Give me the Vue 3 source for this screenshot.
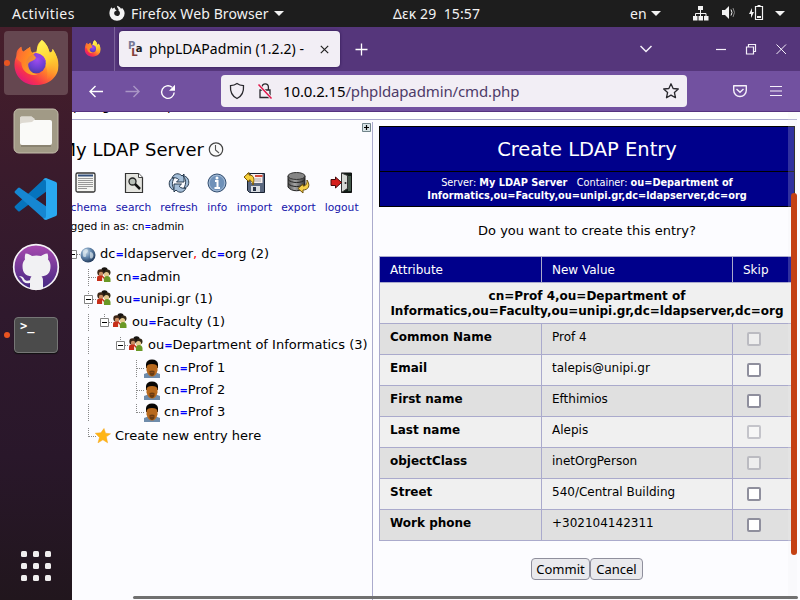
<script setup>
const tree = [
  { cells: ['minus-root'], icon: 'globe', parts: ['dc', '=', 'ldapserver', ',', ' dc', '=', 'org (2)'] },
  { cells: ['blank', 'tee'], icon: 'people', parts: ['cn', '=', 'admin'] },
  { cells: ['blank', 'minus-mid'], icon: 'people', parts: ['ou', '=', 'unipi.gr (1)'] },
  { cells: ['blank', 'line', 'minus-last'], icon: 'people', parts: ['ou', '=', 'Faculty (1)'] },
  { cells: ['blank', 'line', 'blank', 'minus-last'], icon: 'people', parts: ['ou', '=', 'Department of Informatics (3)'] },
  { cells: ['blank', 'line', 'blank', 'blank', 'tee'], icon: 'person', parts: ['cn', '=', 'Prof 1'] },
  { cells: ['blank', 'line', 'blank', 'blank', 'tee'], icon: 'person', parts: ['cn', '=', 'Prof 2'] },
  { cells: ['blank', 'line', 'blank', 'blank', 'corner'], icon: 'person', parts: ['cn', '=', 'Prof 3'] },
  { cells: ['blank', 'corner'], icon: 'star', parts: ['Create new entry here'] },
]
const partClass = (p) => (p === '=' ? 'eq' : p === ',' ? 'comma' : '')
const rows = [
  ['Common Name', 'Prof 4', true],
  ['Email', 'talepis@unipi.gr', false],
  ['First name', 'Efthimios', false],
  ['Last name', 'Alepis', true],
  ['objectClass', 'inetOrgPerson', true],
  ['Street', '540/Central Building', false],
  ['Work phone', '+302104142311', false],
]
const tools = ['schema', 'search', 'refresh', 'info', 'import', 'export', 'logout']
</script>

<template>
  <div class="screen">
    <svg width="0" height="0" class="defs">
      <defs>
        <linearGradient id="fxBody" x1="0.85" y1="0.1" x2="0.2" y2="0.95">
          <stop offset="0" stop-color="#fff04a" /><stop offset="0.3" stop-color="#ffc02c" />
          <stop offset="0.55" stop-color="#ff7b2c" /><stop offset="0.8" stop-color="#f8334b" /><stop offset="1" stop-color="#e0187c" />
        </linearGradient>
        <linearGradient id="fxTail" x1="0.4" y1="0" x2="0.7" y2="1">
          <stop offset="0" stop-color="#fff255" /><stop offset="0.5" stop-color="#ffd332" /><stop offset="1" stop-color="#ff8a2b" stop-opacity="0" />
        </linearGradient>
        <radialGradient id="fxCore" cx="0.55" cy="0.3" r="0.75">
          <stop offset="0" stop-color="#a04cf0" /><stop offset="0.6" stop-color="#6b3fd0" /><stop offset="1" stop-color="#4b3c9e" />
        </radialGradient>
        <linearGradient id="fxHead" x1="0" y1="0" x2="1" y2="0.8">
          <stop offset="0" stop-color="#ff5a3c" /><stop offset="0.5" stop-color="#ff8a22" /><stop offset="1" stop-color="#ffb32c" />
        </linearGradient>
        <linearGradient id="ghBg" x1="0" y1="0" x2="0" y2="1">
          <stop offset="0" stop-color="#a84ab0" /><stop offset="1" stop-color="#432881" />
        </linearGradient>
        <radialGradient id="globeBg" cx="0.35" cy="0.3" r="0.75">
          <stop offset="0" stop-color="#c9dcec" /><stop offset="0.5" stop-color="#6285ab" /><stop offset="1" stop-color="#1d3557" />
        </radialGradient>
        <linearGradient id="metal" x1="0" y1="0" x2="1" y2="0">
          <stop offset="0" stop-color="#555" /><stop offset="0.4" stop-color="#a5a5a5" /><stop offset="1" stop-color="#333" />
        </linearGradient>
        <symbol id="firefox" viewBox="0 0 46 48">
          <path d="M29 1c5 4 7 9 8 13 2 0 3-2 3-4 4 6 6 12 6 17 0 12-10 20-23 20S1 38 1 26c0-5 2-9 4-12 0-3 1-4 3-6 0 3 1 4 2 5 3-2 6-4 7-5 0 3 1 5 2 6 2-1 4-1 6-1-2-5 0-9 4-12z" fill="url(#fxBody)" />
          <path d="M29 1c5 4 7 9 8 13 2 0 3-2 3-4 4 6 6 12 6 17-2 8-7 12-12 14 2-8 0-17-9-20-4-7 0-15 4-20z" fill="url(#fxTail)" />
          <circle cx="23" cy="25" r="10" fill="url(#fxCore)" />
          <path d="M3 18c0-4 0-7 5-10 0 3 1 4 2 5 3-2 6-4 7-5 0 3 1 5 2 6l4 5c-1 4-7 3-8 7 0 6 5 10 10 10-8 3-17-3-17-12-2-2-5-3-5-6z" fill="url(#fxHead)" opacity="0.9" />
          <path d="M21 14c6 0 12 4 12 10-3-5-7-5-9-5z" fill="#9242df" />
        </symbol>
      </defs>
    </svg>

    <header class="topbar">
      <span class="act">Activities</span>
      <svg class="fxmono" viewBox="0 0 16 16"><path d="M8 .8c2 .4 3.300 1.600 4 3l1.200-.8C15 5 15.600 6.500 15.600 8.500a7.500 7.200 0 0 1-15.200 0c0-2 .6-4.200 2.100-6.200l1 1.500 2-1.300.8 2.100 1.400.7-2.200 1.500c-1 2.300.6 4.200 2.600 4.200 3 0 4-4 1.300-5.600C10.300 3.700 8 3.400 8 .8z" fill="#f2f2f2" /></svg>
      <span class="app">Firefox Web Browser</span>
      <i class="caret"></i>
      <span class="clock">Δεκ 29&nbsp; 15:57</span>
      <span class="lang">en</span><i class="caret c2"></i>
      <svg class="sys" width="104" height="18" viewBox="0 0 104 18" fill="#f2f2f2">
        <path d="M7 2h5v4h-5zM2 12h4.500v4.500H2zM7.500 12h4.500v4.500H7.500zM13 12h4.500v4.500H13z" />
        <path d="M9.500 5v8M4.500 13V9.500h10.500V13" fill="none" stroke="#f2f2f2" />
        <path d="M31 6h3l4-4v13l-4-4h-3z" /><path d="M40 5.500q2 3 0 6" fill="none" stroke="#f2f2f2" /><path d="M42 4q3 4.500 0 9" fill="none" stroke="#888" />
        <path d="M61 4l-3 6h2v4l3-6h-2z" /><path d="M64.500 2.500h7v13h-7zM66.500 1.500h3" fill="none" stroke="#f2f2f2" stroke-width="1.200" /><path d="M66 12h4v2h-4z" />
        <path d="M84 7h10l-5 5z" />
      </svg>
    </header>

    <div class="desk">
      <aside class="dock">
        <div class="tile active"><i class="run"></i><svg class="fx" viewBox="0 0 46 48"><use href="#firefox" /></svg></div>
        <div class="tile">
          <svg width="46" height="46" viewBox="0 0 46 46"><rect x="1" y="1" width="44" height="44" rx="5" fill="#a19a86" stroke="#c3bdab" /><path d="M7 10q0-1.500 1.500-1.500h10l3.500 3.500h6v8H7z" fill="#ddd9d0" /><rect x="7" y="12" width="32" height="25" rx="2" fill="#fafaf8" /><path d="M7 16v-6q0-1.500 1.500-1.500h10l3.500 2.500-3 3-10 1z" fill="#dedad2" /><path d="M8 38h30" stroke="#736c5c" /></svg>
        </div>
        <div class="tile">
          <svg width="44" height="44" viewBox="0 0 44 44"><path d="M1 31q-1-1 0-2L29 3q2-2 4-1v12L6 34q-1 1-2 0z" fill="#0674bd" /><path d="M1 14q-1 1 0 2l28 25q2 2 4 1V30L6 11q-1-1-2 0z" fill="#1687d2" /><path d="M32 1l10 4q1 .5 1 2v30q0 1.500-1 2l-10 4q-2 0-3-2 3 1 3-2V5q0-3-3-2 1-2 3-2z" fill="#29a8f0" /></svg>
        </div>
        <div class="tile">
          <svg width="48" height="48" viewBox="0 0 48 48"><circle cx="24" cy="24" r="22.300" fill="url(#ghBg)" stroke="#f5f2f7" stroke-width="1.700" /><path d="M18 46v-6c-5 1-7-1-8-4-.7-1-1.500-2-3-2.500 3-1 4.500 1 5.500 3 1.500 1.500 3 1.500 5.500.8 0-2 .7-3 1.500-3.800-6-.8-9-3.500-9-10.500 0-3 1-5 2.500-6.500-.5-2.500 0-4.500.5-6 3 0 5 1.500 6.500 2.500 3-.8 6-.8 9 0 1.500-1 3.500-2.500 6.500-2.500.5 1.500 1 3.500.5 6 1.500 1.500 2.500 3.500 2.500 6.500 0 7-3 9.700-9 10.500 1 .8 1.500 2 1.500 4.500v8q-6.500 2-13 0z" fill="#f1f1f3" /></svg>
        </div>
        <div class="tile term"><i class="run"></i><div class="terminal"><span>&gt;_</span></div></div>
        <div class="grid9"><i v-for="n in 9" :key="n"></i></div>
      </aside>

      <main class="window">
        <div class="tabs">
          <div class="pin"><svg width="17" height="17" viewBox="0 0 46 48"><use href="#firefox" /></svg></div>
          <div class="tab">
            <span class="fav"><b>P</b><b class="l">L</b><b class="a">a</b></span>
            <span class="ttl">phpLDAPadmin (1.2.2) -</span>
            <svg class="x" width="9" height="9" viewBox="0 0 9 9"><path d="M.8.8l7.400 7.400M8.200.8L.8 8.200" stroke="#222" stroke-width="1.200" /></svg>
          </div>
          <svg class="plus" width="13" height="13" viewBox="0 0 13 13"><path d="M6.500.5v12M.5 6.500h12" stroke="#fff" stroke-width="1.300" /></svg>
          <svg class="winctl" width="148" height="16" viewBox="0 0 148 16" fill="none" stroke="#f5f0fa" stroke-width="1.200">
            <path d="M.5 5l5.500 5.500L11.500 5" stroke-width="1.500" /><path d="M76 8.500h10" /><path d="M106.500 6h7v7h-7zM108.500 6V3.500h7v7h-2" /><path d="M136.500 3.500l9.500 9.500M146 3.500l-9.500 9.500" stroke-width="1" />
          </svg>
        </div>
        <div class="nav">
          <svg class="arrows" width="92" height="18" viewBox="0 0 92 18" fill="none" stroke="#fff" stroke-width="1.400">
            <path d="M7.500 3L2 8.500 7.500 14M2 8.500h13" /><path d="M45.500 3l5.500 5.500-5.500 5.500M51 8.500H37.500" opacity=".4" />
            <path d="M84 4.300A6.300 6.300 0 1 0 86.200 9.500" /><path d="M87 1.700v6h-6z" fill="#fff" stroke="none" />
          </svg>
          <div class="url">
            <svg width="50" height="18" viewBox="0 0 50 18" fill="none" stroke="#29282d" stroke-width="1.300">
              <path d="M8 1.500c2 1.500 4 2 6.500 2.200C15 10 12 14.500 8 16.500 4 14.500 1 10 1.500 3.700 4 3.500 6 3 8 1.500z" />
              <path d="M31 8h10v7.500H31zM33 8V5a3.200 3.200 0 0 1 6.400 0v3" /><path d="M29.500 2.500l13 14" stroke="#f2f0f6" stroke-width="3" /><path d="M29.500 2.500l13 14" stroke="#e2174b" stroke-width="1.500" />
            </svg>
            <span class="addr">10.0.2.15<em>/phpldapadmin/cmd.php</em></span>
            <svg class="star" width="18" height="18" viewBox="0 0 18 18"><path d="M9 1.800l2.100 4.700 5.200.5-3.900 3.500 1.100 5.200L9 13.100l-4.500 2.600 1.100-5.200L1.700 7l5.200-.5z" fill="none" stroke="#29282d" stroke-width="1.300" stroke-linejoin="round" /></svg>
          </div>
          <svg class="right" width="52" height="16" viewBox="0 0 52 16" fill="none" stroke="#f5f0fa" stroke-width="1.400"><path d="M1.700 2.700h12.600v4.500a6.300 6.300 0 0 1-12.600 0z" stroke-linejoin="round" /><path d="M4.500 6L8 9.300 11.500 6" /><path d="M38 3.500h12M38 8h12M38 12.500h12" stroke-width="1.200" /></svg>
        </div>

        <div class="page">
          <div class="above"><span>p</span><span>g</span><span>p</span></div>
          <div class="cols">
            <section class="left">
              <div class="plusrow"><svg width="9" height="9" viewBox="0 0 9 9"><path d="M.5.5h8v8h-8z" fill="#d7e3e6" stroke="#71848a" /><path d="M4.500 2v5M2 4.500h5" stroke="#000" stroke-width="1.200" /></svg></div>
              <h3><span>My LDAP Server</span>
                <svg width="16" height="16" viewBox="0 0 16 16" fill="none"><circle cx="8" cy="7.500" r="6.700" stroke="#444" stroke-width="1.200" fill="#fafafa" /><path d="M7.500 3v5l3.500 3" stroke="#555" stroke-width="1.100" /></svg>
              </h3>
              <div class="tools">
                <div v-for="t in tools" :key="t" class="tool">
                  <svg width="24" height="24" viewBox="0 0 24 24">
                    <g v-if="t === 'schema'"><rect x="2" y="2" width="19" height="19" rx="1.500" fill="#f5f5f2" stroke="#333" stroke-width="1.300" /><path d="M4 4.500h15" stroke="#34507c" stroke-width="2" /><path d="M4 7.500h15M4 9.500h15M4 11.500h15M4 13.500h15M4 15.500h15M4 17.500h9" stroke="#999" /></g>
                    <g v-else-if="t === 'search'"><path d="M3.500 2.500h13l4 4v15h-17z" fill="#e4e4df" stroke="#333" stroke-width="1.200" /><path d="M16.500 2.500v4h4" fill="#fff" stroke="#444" /><circle cx="10.500" cy="10.500" r="3.500" fill="#b8bfb8" stroke="#222" stroke-width="1.300" /><path d="M13 13l5 5" stroke="#111" stroke-width="2.500" /></g>
                    <g v-else-if="t === 'refresh'" stroke="#172a40" fill="#a4bed8" stroke-linejoin="round" stroke-width=".9"><path d="M5 7C7 2 12 1.500 15 5l2-2v8h-7.500l2.300-2.300C10 6.500 7 6.500 5 7z" /><path d="M7 7c-4 0-6 5-4 9 1 2 3 3 5 3-3-3-3.500-7-1-12z" /><path d="M19 17c-2 5-7 5.500-10 2l-2 2v-8h7.500l-2.300 2.300C14 17.500 17 17.500 19 17z" /><path d="M17 17c4 0 6-5 4-9-1-2-3-3-5-3 3 3 3.500 7 1 12z" /></g>
                    <g v-else-if="t === 'info'"><circle cx="12" cy="12" r="9" fill="#6f91b9" stroke="#365071" /><circle cx="12" cy="12" r="7.800" fill="none" stroke="#a4bbd5" /><path d="M10 10h2.500v6.500M9.500 17h5.500" stroke="#fff" stroke-width="2" fill="none" /><circle cx="12" cy="7" r="1.500" fill="#fff" /></g>
                    <g v-else-if="t === 'import'"><path d="M4.500 2.500h17v19h-15l-2-2z" fill="#5b6880" stroke="#172030" /><path d="M8 3h11.500v9H8z" fill="#f7eeee" /><path d="M12 5h7.500" stroke="#d45040" stroke-width="2" /><path d="M12 8h6M12 10h6" stroke="#aaa" /><path d="M8 15h9v6H8z" fill="#d9dde2" /><path d="M10 16h3v4h-3z" fill="#293449" /><path d="M1 6l5-4.500v2.500c5 0 6 4 4 10-1-4-2-5-4-5v2z" fill="#f6cf38" stroke="#7a5706" /></g>
                    <g v-else-if="t === 'export'"><path d="M2 5v11c3 5 14 5 17 0V5z" fill="url(#metal)" stroke="#222" /><path d="M2 8.500c3 4 14 4 17 0M2 12.500c3 4 14 4 17 0" stroke="#222" fill="none" /><ellipse cx="10.500" cy="5" rx="8.500" ry="3.500" fill="#858585" stroke="#333" /><path d="M21 9c4 6 1 10-4 10v3l-5-4.500 5-4.500v2c3 0 4-2 4-6z" fill="#f6cf48" stroke="#6f5310" /></g>
                    <g v-else><path d="M11.500 2h10v19.500h-10z" fill="#111e16" stroke="#111" /><path d="M11.500 2l6 2.500v13l-6 4z" fill="#d5d8d4" stroke="#333" /><path d="M18 5h3v15h-3z" fill="#45584b" /><circle cx="15.500" cy="12" r="1" fill="#222" /><path d="M1 8.500h4.500V6l6 5.500-6 5.500v-2.500H1z" fill="#d51e1c" stroke="#450909" /></g>
                  </svg>
                  <a>{{ t }}</a>
                </div>
              </div>
              <p class="logged">Logged in as: cn<b class="eq">=</b>admin</p>
              <div class="tree">
                <div v-for="(r, i) in tree" :key="i" class="node">
                  <svg v-for="(c, j) in r.cells" :key="j" width="16" height="17" viewBox="0 0 16 17" class="cell">
                    <g stroke="#888" stroke-dasharray="1 1" fill="none">
                      <path v-if="c === 'line' || c === 'tee' || c === 'minus-mid'" d="M8.500 0v17" />
                      <path v-if="c === 'corner' || c === 'minus-last'" d="M8.500 0v9" />
                      <path v-if="c !== 'line' && c !== 'blank'" d="M9 8.500h7" />
                    </g>
                    <g v-if="c.startsWith('minus')"><path d="M4.500 4.500h8v8h-8z" fill="#fff" stroke="#828282" /><path d="M6 8.500h5" stroke="#000" /></g>
                  </svg>
                  <svg v-if="r.icon === 'globe'" class="ico" width="16" height="16" viewBox="0 0 16 16"><circle cx="8" cy="8" r="7.500" fill="url(#globeBg)" /><path d="M3 4c3-3 5-2 5 0s-3 2-2 4-2 3-3 1zM10 5c3 0 4 3 3 5s-3 2-3 0z" fill="#e5eef2" opacity=".65" /></svg>
                  <svg v-else-if="r.icon === 'people'" class="ico high" width="16" height="16" viewBox="0 0 16 16"><circle cx="8.500" cy="3.500" r="3.200" fill="#181410" /><circle cx="4.500" cy="5.500" r="3.200" fill="#3d2617" /><circle cx="5" cy="7" r="2.200" fill="#c98f64" /><circle cx="11.500" cy="5.500" r="3" fill="#332817" /><circle cx="10.500" cy="7.500" r="2.600" fill="#e4c88e" /><path d="M1 14v-3.500q0-2 2.500-2h3l2 2V14z" fill="#c62e18" /><path d="M8 15v-4q1-2 3-2 3 0 3.500 3v3z" fill="#6a9825" /><path d="M6 10l2 2v2H6z" fill="#f3e5d5" /></svg>
                  <svg v-else-if="r.icon === 'person'" class="ico" width="16" height="19" viewBox="0 0 16 19"><path d="M0 19v-4l4-1.500h8l4 1.500v4z" fill="#6f8cab" /><path d="M2 9V5Q2.700.5 8 .5T14 5v4z" fill="#080604" /><path d="M2.500 8Q3 5 8 5t5.500 3v3.500q-1.500 6-5.500 6t-5.500-6z" fill="#b8691d" /><path d="M5.500 12q2.500-1 5 0v3q-1 2-2.500 2t-2.500-2z" fill="#6a3d12" /><path d="M6.500 13.500h3" stroke="#914b17" /></svg>
                  <svg v-else class="ico starico" width="16" height="16" viewBox="0 0 16 16"><path d="M9 .5l1.500 4.700 5 .6-4.200 3 1.300 6-4.700-3-4.900 3 1.500-5.300L.3 5.200l5.500-.4z" fill="#ffb514" stroke="#f4a51b" stroke-width=".5" /></svg>
                  <span class="lbl"><span v-for="(p, k) in r.parts" :key="k" :class="partClass(p)">{{ p }}</span></span>
                </div>
              </div>
            </section>

            <section class="right-pane">
              <div class="title">
                <h1>Create LDAP Entry</h1>
                <div class="sub">Server: <b>My LDAP Server</b> &nbsp; Container: <b>ou=Department of<br />Informatics,ou=Faculty,ou=unipi.gr,dc=ldapserver,dc=org</b></div>
              </div>
              <p class="ask">Do you want to create this entry?</p>
              <div class="table">
                <div class="tr head"><div>Attribute</div><div>New Value</div><div>Skip</div></div>
                <div class="dn">cn=Prof 4,ou=Department of<br />Informatics,ou=Faculty,ou=unipi.gr,dc=ldapserver,dc=org</div>
                <div v-for="(r, i) in rows" :key="i" class="tr" :class="{ even: i % 2 === 0 }">
                  <div><b>{{ r[0] }}</b></div><div>{{ r[1] }}</div><div class="ck"><i :class="{ off: r[2] }"></i></div>
                </div>
              </div>
              <div class="btns"><button class="commit">Commit</button><button>Cancel</button></div>
            </section>
          </div>
          <div class="vtrack"></div><div class="vthumb"></div><div class="hthumb"></div>
        </div>
      </main>
    </div>
  </div>
</template>

<style>
body { margin: 0; overflow: hidden; }
</style>
<style scoped>
* { box-sizing: border-box; }
.screen { width: 800px; height: 600px; display: flex; flex-direction: column; overflow: hidden; position: relative; font-family: "DejaVu Sans", sans-serif; color: #000; }
.defs { position: absolute; }
svg { flex: none; display: block; }
.topbar { height: 27px; flex: none; background: #1d1d1d; color: #f2f2f2; display: flex; align-items: center; font: 14px/27px "Noto Sans", sans-serif; white-space: nowrap; }
.topbar span { flex: none; margin-top: -1px; }
.act { width: 97px; padding-left: 12px; letter-spacing: .45px; }
.fxmono { width: 16px; height: 16px; margin-left: 12px; margin-top: -2px; }
.app { width: 139px; margin-left: 6px; letter-spacing: .12px; }
.caret { border: 5px solid transparent; border-top-color: #f2f2f2; border-bottom: 0; margin-left: 4px; margin-top: 0; }
.clock { margin-left: 109px; width: 89px; letter-spacing: .1px; }
.lang { width: 17px; margin-left: 148px; }
.sys { margin-left: 30px; margin-top: -1px; }
.desk { flex: 1; display: flex; min-height: 0; }
.dock { width: 72px; flex: none; background: linear-gradient(180deg, #471e2b 0, #3a1b2c 25%, #2f192d 50%, #29172a 75%, #21161d 100%); padding-top: 4px; display: flex; flex-direction: column; align-items: center; gap: 4px; }
.tile { width: 64px; height: 64px; display: flex; align-items: center; justify-content: center; border-radius: 4px; position: relative; }
.active { background: #654750; }
.fx { width: 46px; height: 47px; margin-top: -2px; }
.run { position: absolute; left: 0; top: 29px; width: 6px; height: 6px; border-radius: 3px; background: #e95420; }
.terminal { width: 44px; height: 36px; border: 1px solid #767676; border-radius: 4px; background: #4b4b4b; color: #fff; font: bold 12px/12px "DejaVu Sans Mono", monospace; padding: 2px 5px; box-shadow: 0 1px 1px #111; }
.grid9 { display: grid; grid-template-columns: repeat(3, 6px); gap: 6px; margin-top: auto; margin-bottom: 19px; }
.grid9 i { width: 6px; height: 6px; border-radius: 1.500px; background: #f0eeee; }
.window { flex: 1; min-width: 0; display: flex; flex-direction: column; }
.tabs { height: 44px; flex: none; background: #55367b; display: flex; align-items: center; }
.pin { width: 43px; height: 44px; border-right: 1px solid #7b629a; display: flex; align-items: center; padding: 0 0 1px 12px; }
.tab { width: 221px; height: 36px; margin-left: 4px; border-radius: 4px; background: #f2eef5; box-shadow: 0 0 3px #2d1450; display: flex; align-items: center; padding-left: 9px; font: 14px/20px "Noto Sans", sans-serif; white-space: nowrap; }
.fav { width: 21px; height: 16px; display: flex; font: bold 10px/9px "DejaVu Sans", sans-serif; color: #777996; }
.fav .l { color: #82403c; margin: 7px 0 0 -4px; }
.fav .a { color: #222; margin: 3px 0 0 -2px; }
.ttl { width: 171px; letter-spacing: .04px; }
.plus { margin-left: 15px; }
.winctl { margin-left: auto; margin-right: 12px; }
.nav { height: 41px; flex: none; background: #7251a0; border-bottom: 1px solid #57347f; display: flex; align-items: center; padding-left: 16px; }
.arrows { margin-top: 1px; }
.url { margin-left: 41px; width: 466px; height: 32px; border-radius: 4px; background: #f2eef5; display: flex; align-items: center; padding: 0 7px 0 8px; white-space: nowrap; }
.addr { flex: 1; margin-left: 4px; font: 15px/20px "Noto Sans", sans-serif; letter-spacing: -.13px; }
.addr em { font-style: normal; color: #4d3b68; }
.right { margin-left: 45px; }
.page { flex: 1; min-height: 0; position: relative; background: #fcfcff; display: flex; flex-direction: column; overflow: hidden; }
.above { height: 8px; flex: none; background: #fff; border-bottom: 1px solid #aaaacc; overflow: hidden; font-size: 13px; line-height: 16px; margin-right: 3px; display: flex; padding-left: 1px; }
.above span { margin-top: -14px; width: 29px; }
.above span:nth-child(2) { width: 65px; }
.cols { flex: 1; display: flex; }
.left { width: 301px; flex: none; border-right: 1px solid #aaaacc; margin-top: 2px; overflow: hidden; }
.plusrow { height: 10px; display: flex; justify-content: flex-end; padding: 1px 1px 0 0; }
h3 { margin: 6px 0 0 -11px; height: 24px; width: 163px; font: 18px/24px "DejaVu Sans", sans-serif; display: flex; align-items: center; justify-content: flex-end; gap: 4px; white-space: nowrap; }
.tools { display: flex; gap: 9px; margin: 9px 0 0 -7px; }
.tool { display: flex; flex-direction: column; align-items: center; font-size: 10.700px; line-height: 14px; color: #1515aa; }
.tool svg { margin: 0 -1.500px; }
.tool a { margin-top: 6px; }
.logged { margin: 5px 0 0; width: 112px; display: flex; justify-content: flex-end; white-space: nowrap; font-size: 10.700px; line-height: 14px; letter-spacing: -.1px; }
.eq { color: #00f; font-weight: bold; font-size: 10px; }
.logged .eq { font-size: 8px; }
.comma { color: #f00; }
.tree { margin: 9px 0 0 -8px; display: grid; grid-template-rows: 23px 22px 23px 23px 23px 22px 22px 23px 24px; font-size: 13px; }
.node { display: flex; align-items: center; white-space: nowrap; }
.high { margin-top: -4px; }
.starico { margin-left: -1px; }
.lbl { margin-left: 4px; white-space: pre; line-height: 16px; }
.right-pane { width: 416px; flex: none; padding: 6px 0 0; margin-left: 6px; display: flex; flex-direction: column; align-items: center; }
.title { width: 416px; height: 81px; border: 1px solid #000; background: #00008b; color: #fff; text-align: center; }
h1 { margin: 0; height: 45px; font: 19.500px/45px "DejaVu Sans", sans-serif; border-bottom: 1px solid #000; }
.sub { font-size: 9.750px; line-height: 13px; padding-top: 4px; white-space: nowrap; }
.ask { margin: 15px 0 17px; font-size: 13px; line-height: 17px; }
.table { width: 416px; border: 1px solid #aaaacc; border-bottom: 0; font-size: 12px; line-height: 15px; }
.tr { display: grid; grid-template-columns: 162px 191px 1fr; height: 31px; background: #f0f0f0; border-bottom: 1px solid #aaaacc; }
.tr > div { padding: 6px 10px 0; border-right: 1px solid #aaaacc; white-space: nowrap; }
.tr > div:last-child { border: 0; }
.tr.even { background: #e0e0e0; }
.tr.head { height: 26px; background: #00008b; color: #fff; }
.dn { height: 41px; background: #f0f0f0; border-bottom: 1px solid #aaaacc; font-weight: bold; text-align: center; padding-top: 6px; white-space: nowrap; }
.tr > .ck { padding: 8px 0 0 14px; }
.ck i { display: block; width: 14px; height: 14px; border: 2px solid #8f8f9d; border-radius: 2px; background: #fff; }
.ck .off { opacity: .45; }
.btns { display: flex; margin-top: 17px; }
button { width: 53px; height: 22px; padding: 0; border: 1px solid #8f8f9d; border-radius: 4px; background: #e9e9ed; color: #000; font: 13px/19px "Noto Sans", sans-serif; }
.commit { width: 59px; }
.vtrack { position: absolute; right: 3px; top: 0; width: 9px; height: 488px; background: rgba(240, 240, 240, .2); }
.vthumb { position: absolute; right: 3px; top: 81px; width: 6px; height: 362px; border-radius: 3px; background: #c44114; }
.hthumb { position: absolute; left: 61px; right: 2px; bottom: 1px; height: 3px; border-radius: 2px; background: #707070; }
</style>
